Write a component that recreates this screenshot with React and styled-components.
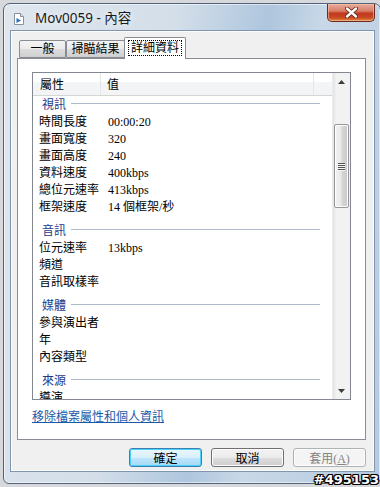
import React from "react";
import styled, { createGlobalStyle } from "styled-components";

const GlobalStyle = createGlobalStyle`
  html, body {
    margin: 0;
    padding: 0;
  }
  body {
    width: 380px;
    height: 487px;
    overflow: hidden;
    background: #d6d8db;
    font-family: "Liberation Serif", "Noto Sans CJK TC", serif;
    font-size: 12px;
    color: #000;
  }
`;

const CJK = `"Liberation Serif", "Noto Sans CJK TC", serif`;

const Window = styled.div`
  position: relative;
  box-sizing: border-box;
  margin: 3px 0 0 3px;
  width: 378px;
  height: 481px;
  border: 1px solid #52637a;
  border-radius: 7px 7px 6px 6px;
  background: linear-gradient(
    100deg,
    #dfe6ee 0%,
    #d3dee9 38%,
    #aec6de 58%,
    #c9d8e7 70%,
    #b4cae0 100%
  );
  display: flex;
  flex-direction: column;
  padding: 0 5px 11px 6px;
  box-shadow: inset 0 0 0 1px rgba(255, 255, 255, 0.55);
`;

const TitleBar = styled.div`
  height: 26px;
  display: flex;
  align-items: flex-start;
`;

const TitleIcon = styled.svg`
  margin: 9px 0 0 4px;
  width: 10px;
  height: 12px;
`;

const TitleText = styled.div`
  margin: 6px 0 0 11px;
  font-family: "Noto Sans", "Open Sans", "Noto Sans CJK TC", sans-serif;
  font-size: 13.5px;
  line-height: 16px;
  color: #1b1b1b;
  text-shadow: 0 0 6px rgba(255, 255, 255, 0.9);
`;

const CloseButton = styled.div`
  margin-left: auto;
  width: 48px;
  height: 18px;
  box-sizing: border-box;
  border: 1px solid #6d2a1e;
  border-top: none;
  border-radius: 0 0 5px 5px;
  background: linear-gradient(
    180deg,
    #e9a999 0%,
    #d9826b 40%,
    #c0391d 55%,
    #c74a24 80%,
    #e08a3a 100%
  );
  box-shadow: inset 0 0 0 1px rgba(255, 200, 180, 0.55);
  display: flex;
  align-items: center;
  justify-content: center;
`;

const Client = styled.div`
  flex: 1;
  box-sizing: border-box;
  border: 1px solid #8195ad;
  background: #f0f0f0;
  display: flex;
  flex-direction: column;
  padding: 6px 8px 0 6px;
  box-shadow: inset 0 0 0 1px #fbfbfb;
`;

const TabRow = styled.div`
  display: flex;
  align-items: flex-end;
  height: 21px;
  padding-left: 2px;
  position: relative;
  z-index: 1;
`;

const Tab = styled.div`
  box-sizing: border-box;
  height: ${(p) => (p.$active ? "22px" : "18px")};
  margin-bottom: ${(p) => (p.$active ? "-1px" : "0")};
  margin-left: ${(p) => (p.$active ? "-1px" : "0")};
  width: ${(p) => p.$w}px;
  border: 1px solid #898c95;
  border-bottom: ${(p) => (p.$active ? "none" : "1px solid #898c95")};
  border-radius: 2px 2px 0 0;
  background: ${(p) =>
    p.$active ? "#ffffff" : "linear-gradient(180deg, #f3f3f3 0%, #ebebeb 50%, #dddddd 51%, #cfcfcf 100%)"};
  display: flex;
  align-items: flex-start;
  justify-content: center;
  padding-top: ${(p) => (p.$active ? "3px" : "1px")};
  font-family: ${CJK};
  font-size: 12px;
  line-height: 14px;
`;

const Focus = styled.span`
  outline: 1px dotted #000;
  outline-offset: 0;
  padding: 0 2px;
`;

const Panel = styled.div`
  box-sizing: border-box;
  height: 382px;
  border: 1px solid #898c95;
  background: #ffffff;
  padding: 13px 14px 0 14px;
  display: flex;
  flex-direction: column;
`;

const ListView = styled.div`
  box-sizing: border-box;
  height: 328px;
  border: 1px solid #828790;
  display: flex;
  background: #fff;
`;

const ListBody = styled.div`
  flex: 1;
  display: flex;
  flex-direction: column;
  overflow: hidden;
`;

const Header = styled.div`
  height: 22px;
  display: flex;
  border-bottom: 1px solid #d5d5d5;
  background: linear-gradient(180deg, #ffffff 0%, #ffffff 40%, #f4f5f7 41%, #f3f4f6 100%);
  flex-shrink: 0;
`;

const HeaderCell = styled.div`
  box-sizing: border-box;
  width: ${(p) => (p.$w ? `${p.$w}px` : "auto")};
  flex: ${(p) => (p.$w ? "none" : "1")};
  border-right: ${(p) => (p.$last ? "none" : "1px solid #e3e5e8")};
  padding-left: ${(p) => p.$pl || 6}px;
  display: flex;
  align-items: center;
  font-family: ${CJK};
  font-size: 12px;
`;

const Group = styled.div`
  box-sizing: border-box;
  display: flex;
  align-items: center;
  height: ${(p) => (p.$first ? 18 : 19)}px;
  margin-top: ${(p) => (p.$first ? 0 : 5)}px;
  padding: 0 12px ${(p) => (p.$first ? 3 : 2)}px 9px;
  flex-shrink: 0;
`;

const GroupLabel = styled.span`
  font-family: ${CJK};
  font-size: 12px;
  color: #1e3b8a;
`;

const GroupLine = styled.span`
  flex: 1;
  height: 1px;
  margin-left: 5px;
  background: #aebbcc;
`;

const Row = styled.div`
  display: grid;
  grid-template-columns: 68px 1fr;
  height: 17px;
  align-items: center;
  flex-shrink: 0;
  font-family: ${CJK};
  font-size: 12px;
  line-height: 17px;
  white-space: nowrap;
`;

const Cell = styled.span`
  padding-left: ${(p) => (p.$value ? 7 : 6)}px;
`;

const Scrollbar = styled.div`
  width: 17px;
  display: flex;
  flex-direction: column;
  background: linear-gradient(90deg, #e4e4e4 0%, #f2f2f2 20%, #f2f2f2 100%);
  border-left: 1px solid #ececec;
`;

const ScrollArrow = styled.div`
  height: 17px;
  display: flex;
  align-items: center;
  justify-content: center;
  flex-shrink: 0;
`;

const Track = styled.div`
  flex: 1;
  padding-top: ${(p) => p.$offset}px;
  display: flex;
  flex-direction: column;
  align-items: center;
`;

const Thumb = styled.div`
  box-sizing: border-box;
  width: 15px;
  height: ${(p) => p.$h}px;
  border: 1px solid #979797;
  border-radius: 2px;
  background: linear-gradient(90deg, #f3f3f3 0%, #e8e8e8 45%, #d6d6d6 55%, #cacaca 100%);
  box-shadow: inset 0 0 0 1px #fdfdfd;
  display: flex;
  flex-direction: column;
  align-items: center;
  justify-content: center;
  gap: 1px;
`;

const Grip = styled.span`
  width: 7px;
  height: 1px;
  background: #555;
  box-shadow: 0 1px 0 #f6f6f6;
`;

const RemoveLink = styled.a`
  margin-top: 10px;
  align-self: flex-start;
  font-family: ${CJK};
  font-size: 12px;
  line-height: 14px;
  color: #1a5aa8;
  text-decoration: underline;
  cursor: pointer;
`;

const ButtonRow = styled.div`
  display: flex;
  justify-content: flex-end;
  gap: 9px;
  margin-top: 8px;
`;

const Button = styled.div`
  box-sizing: border-box;
  width: 73px;
  height: 19px;
  border-radius: 3px;
  border: 1px solid ${(p) => (p.$default ? "#3c7fb1" : p.$disabled ? "#adb2b5" : "#707070")};
  background: ${(p) =>
    p.$disabled
      ? "#f4f4f4"
      : p.$default
      ? "linear-gradient(180deg, #eaf6fd 0%, #d9f0fc 50%, #bee6fd 51%, #a7d9f5 100%)"
      : "linear-gradient(180deg, #f2f2f2 0%, #ebebeb 50%, #dddddd 51%, #cfcfcf 100%)"};
  box-shadow: ${(p) => (p.$default ? "inset 0 0 0 1px #48d2f9" : "inset 0 0 0 1px #fcfcfc")};
  color: ${(p) => (p.$disabled ? "#838383" : "#000")};
  display: flex;
  align-items: center;
  justify-content: center;
  font-family: ${CJK};
  font-size: 12px;
`;

const Watermark = styled.div`
  position: absolute;
  right: 1px;
  bottom: -4px;
  font-family: "DejaVu Sans", sans-serif;
  font-weight: bold;
  font-size: 13px;
  line-height: 15px;
  color: #fff;
  text-shadow: 1px 0 0 #000, -1px 0 0 #000, 0 1px 0 #000, 0 -1px 0 #000,
    1px 1px 0 #000, -1px -1px 0 #000, 1px -1px 0 #000, -1px 1px 0 #000;
`;

const video = [
  ["時間長度", "00:00:20"],
  ["畫面寬度", "320"],
  ["畫面高度", "240"],
  ["資料速度", "400kbps"],
  ["總位元速率", "413kbps"],
  ["框架速度", "14 個框架/秒"],
];

const audio = [
  ["位元速率", "13kbps"],
  ["頻道", ""],
  ["音訊取樣率", ""],
];

const media = [
  ["參與演出者", ""],
  ["年", ""],
  ["內容類型", ""],
];

const source = [["導演", ""]];

const groups = [
  { name: "視訊", rows: video },
  { name: "音訊", rows: audio },
  { name: "媒體", rows: media },
  { name: "來源", rows: source },
];

const Triangle = ({ up }) => (
  <svg width="7" height="4" viewBox="0 0 7 4">
    <path d={up ? "M0 4 L3.5 0 L7 4 Z" : "M0 0 L3.5 4 L7 0 Z"} fill="#3d3d3d" />
  </svg>
);

export default function App() {
  return (
    <>
      <GlobalStyle />
      <Window>
        <TitleBar>
          <TitleIcon viewBox="0 0 10 12">
            <path d="M0.5 0.5 H6.5 L9.5 3.5 V11.5 H0.5 Z" fill="#fff" stroke="#8a8f98" />
            <path d="M6.5 0.5 V3.5 H9.5" fill="#e5e5e5" stroke="#8a8f98" />
            <path d="M2.5 5 L7 7.5 L2.5 10 Z" fill="#2d6fc0" />
          </TitleIcon>
          <TitleText>Mov0059 - 內容</TitleText>
          <CloseButton>
            <svg width="13" height="11" viewBox="0 0 13 11">
              <path d="M2 1.5 L11 9.5 M11 1.5 L2 9.5" stroke="#5a2015" strokeWidth="4" strokeLinecap="round" />
              <path d="M2 1.5 L11 9.5 M11 1.5 L2 9.5" stroke="#ffffff" strokeWidth="2.4" strokeLinecap="round" />
            </svg>
          </CloseButton>
        </TitleBar>
        <Client>
          <TabRow>
            <Tab $w={47}>一般</Tab>
            <Tab $w={59}>掃瞄結果</Tab>
            <Tab $w={62} $active>
              <Focus>詳細資料</Focus>
            </Tab>
          </TabRow>
          <Panel>
            <ListView>
              <ListBody>
                <Header>
                  <HeaderCell $w={68} $pl={7}>屬性</HeaderCell>
                  <HeaderCell $w={213}>值</HeaderCell>
                  <HeaderCell $last />
                </Header>
                {groups.map((g, gi) => (
                  <React.Fragment key={g.name}>
                    <Group $first={gi === 0}>
                      <GroupLabel>{g.name}</GroupLabel>
                      <GroupLine />
                    </Group>
                    {g.rows.map(([k, v]) => (
                      <Row key={k}>
                        <Cell>{k}</Cell>
                        <Cell $value>{v}</Cell>
                      </Row>
                    ))}
                  </React.Fragment>
                ))}
              </ListBody>
              <Scrollbar>
                <ScrollArrow>
                  <Triangle up />
                </ScrollArrow>
                <Track $offset={34}>
                  <Thumb $h={84}>
                    <Grip />
                    <Grip />
                    <Grip />
                    <Grip />
                  </Thumb>
                </Track>
                <ScrollArrow>
                  <Triangle />
                </ScrollArrow>
              </Scrollbar>
            </ListView>
            <RemoveLink>移除檔案屬性和個人資訊</RemoveLink>
          </Panel>
          <ButtonRow>
            <Button $default>確定</Button>
            <Button>取消</Button>
            <Button $disabled>
              <span>
                套用(<u>A</u>)
              </span>
            </Button>
          </ButtonRow>
        </Client>
        <Watermark>#495153</Watermark>
      </Window>
    </>
  );
}
